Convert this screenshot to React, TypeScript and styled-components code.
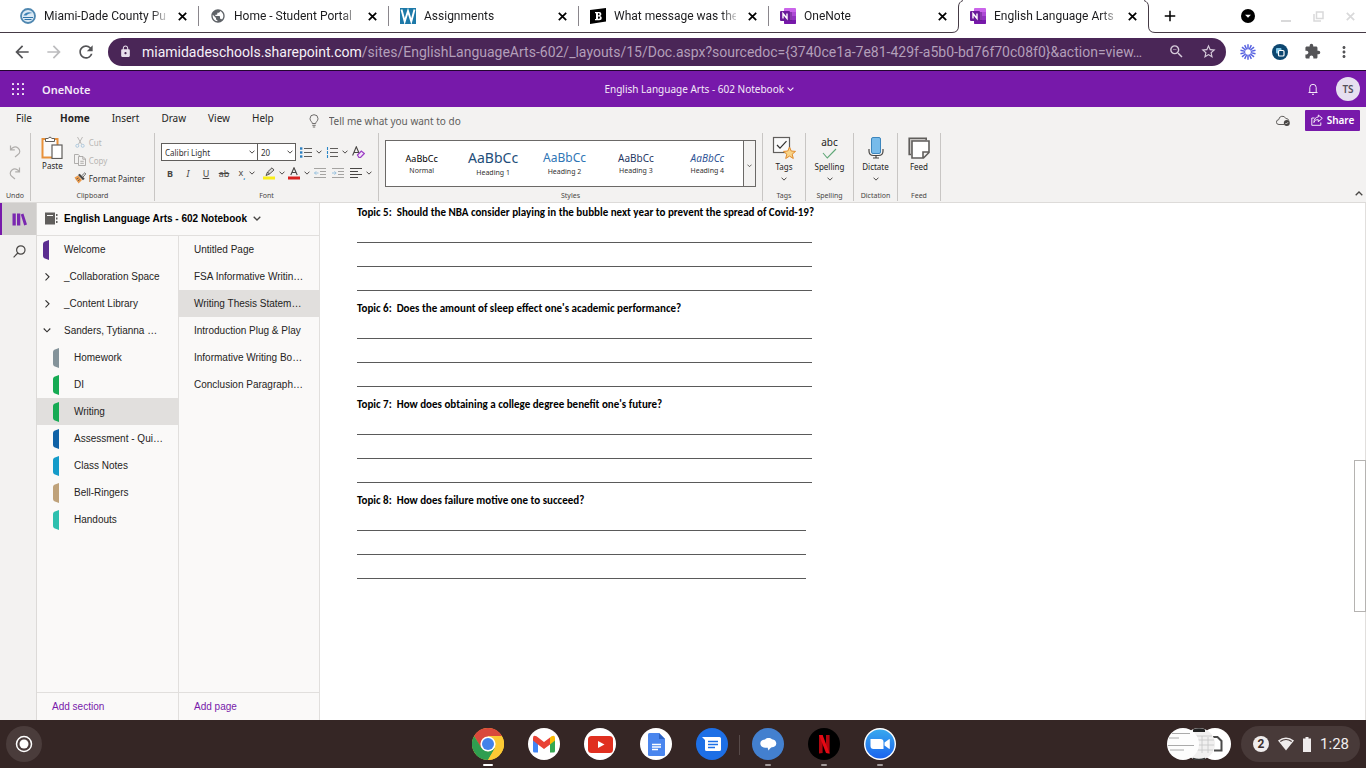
import React from 'react';
import styled, { createGlobalStyle, css } from 'styled-components';
import {
  MdArrowBack, MdArrowForward, MdRefresh, MdLock, MdZoomOut, MdStarBorder,
  MdExtension, MdMoreVert, MdPublic, MdAdd, MdArrowDropDown,
} from 'react-icons/md';

const ui = '"Noto Sans", "Open Sans", sans-serif';
const chromeFont = 'Roboto, sans-serif';
const side = '"Liberation Sans", Arial, sans-serif';
const docFont = 'Carlito, Lato, sans-serif';

const purple = '#7719aa';
const ribbonBg = '#f3f2f1';
const rule = '#c8c6c4';

const GlobalStyle = createGlobalStyle`
  *, *::before, *::after { box-sizing: border-box; }
  body { margin: 0; background: #fff; font-family: ${ui}; color: #252423; }
  button { border: 0; padding: 0; background: none; color: inherit; font: inherit; }
  a { color: inherit; text-decoration: none; }
  svg { display: block; flex: none; }
`;

const Screen = styled.div`
  display: flex;
  flex-direction: column;
  height: 100vh;
  overflow: hidden;
`;

/* ---------- browser tabs ---------- */

const TabStrip = styled.div`
  display: flex;
  flex: none;
  height: 33px;
  padding-left: 8px;
  border-bottom: 1px solid #453a45;
  font-family: ${chromeFont};
  font-size: 12px;
  color: #1c1c1e;
`;

const Tab = styled.div<{ $active?: boolean; $divider?: boolean }>`
  position: relative;
  display: flex;
  align-items: center;
  gap: 8px;
  flex: 0 1 190px;
  min-width: 0;
  padding: 0 8px 0 12px;
  ${p => p.$active && css`margin-bottom: -1px; padding-bottom: 1px; background: #fff;`}
  ${p => p.$divider && css`
    &::after {
      content: '';
      position: absolute;
      right: -1px;
      top: 6px;
      height: 20px;
      border-right: 1px solid #8a868c;
    }
  `}
`;

const TabTitle = styled.span`
  flex: 1;
  min-width: 0;
  white-space: nowrap;
  mask-image: linear-gradient(to right, #000 88%, rgba(0, 0, 0, 0.2));
`;

const CloseTab = styled.button`
  display: grid;
  place-items: center;
  width: 16px;
  height: 16px;
  color: #000;
`;

const Edge = styled.svg<{ $right?: boolean }>`
  position: absolute;
  top: 0;
  ${p => (p.$right ? 'right: -7px; transform: scaleX(-1);' : 'left: -6px;')}
`;

const WindowControls = styled.div`
  display: flex;
  align-items: center;
  margin-left: auto;
  padding-right: 8px;
  gap: 16px;
  color: #d9d9da;
`;

const NewTab = styled.button`
  display: grid;
  place-items: center;
  width: 20px;
  margin-left: 12px;
  color: #000;
`;

const Round = styled.button`
  display: grid;
  place-items: center;
  width: 14px;
  height: 14px;
  margin: 0 7px 0 0;
  border-radius: 50%;
  background: #000;
  color: #fff;
`;

const WinButton = styled.button`
  display: grid;
  place-items: center;
  width: 16px;
  height: 16px;
`;

/* ---------- address bar ---------- */

const Toolbar = styled.div`
  display: flex;
  align-items: center;
  flex: none;
  height: 38px;
  padding: 0 6px;
  border-bottom: 1px solid #22062f;
  color: #5f6368;
`;

const ToolButton = styled.button<{ $faint?: boolean }>`
  display: grid;
  place-items: center;
  width: 32px;
  height: 28px;
  color: ${p => (p.$faint ? '#bcbcbe' : '#545457')};
`;

const Omnibox = styled.div`
  display: flex;
  align-items: center;
  flex: 1;
  min-width: 0;
  height: 28px;
  margin: 0 6px;
  padding: 0 2px 0 11px;
  border-radius: 14px;
  background: #4a2657;
  color: #e9e0ec;
  font-family: ${chromeFont};
  font-size: 14px;
`;

const Url = styled.a`
  flex: 1;
  min-width: 0;
  margin: 0 8px 0 10px;
  overflow: hidden;
  white-space: nowrap;
  text-overflow: ellipsis;
  color: #b39fba;
  b { font-weight: 400; color: #f6f1f8; }
`;

const OmniButton = styled.button`
  display: grid;
  place-items: center;
  width: 32px;
  color: #d7cbdb;
`;

/* ---------- OneNote header ---------- */

const AppHeader = styled.header`
  display: flex;
  align-items: center;
  justify-content: space-between;
  flex: none;
  height: 36px;
  padding: 0 6px 0 12px;
  background: ${purple};
  color: #f4eaf8;
  font-size: 10px;
`;

const HeaderSide = styled.div`
  display: flex;
  align-items: center;
  gap: 18px;
`;

const Brand = styled.span`
  font-size: 11px;
  font-weight: 600;
`;

const NotebookTitle = styled.button`
  display: flex;
  align-items: center;
  gap: 3px;
`;

const Avatar = styled.span`
  display: grid;
  place-items: center;
  width: 24px;
  height: 24px;
  border-radius: 50%;
  background: #e6dff0;
  color: #55505c;
  font-size: 10px;
  font-weight: 600;
`;

/* ---------- ribbon ---------- */

const RibbonTabs = styled.div`
  display: flex;
  align-items: center;
  flex: none;
  height: 26px;
  padding: 0 6px 0 16px;
  background: ${ribbonBg};
  font-size: 10px;
`;

const RibbonTab = styled.button<{ $active?: boolean }>`
  height: 22px;
  margin: 0 22px 4px 0;
  font-weight: ${p => (p.$active ? 700 : 400)};
  &:first-child { margin-right: 28px; }
`;

const TellMe = styled.label`
  display: flex;
  align-items: center;
  gap: 10px;
  flex: 1;
  margin: 2px 0 0 13px;
  color: #605e5c;
  input {
    width: 200px;
    padding: 0;
    border: 0;
    background: none;
    font: inherit;
    color: inherit;
  }
  input::placeholder { color: #605e5c; opacity: 1; }
`;

const ShareButton = styled.button`
  display: flex;
  align-items: center;
  justify-content: center;
  gap: 4px;
  width: 55px;
  height: 21px;
  margin-left: 15px;
  border-radius: 1px;
  background: ${purple};
  color: #fff;
  font-weight: 600;
`;

const Ribbon = styled.div`
  display: flex;
  flex: none;
  height: 70px;
  padding-bottom: 1px;
  border-bottom: 1px solid #dddbd9;
  background: ${ribbonBg};
`;

const Group = styled.section<{ $w: number }>`
  display: flex;
  flex-direction: column;
  flex: none;
  width: ${p => p.$w}px;
  border-right: 1px solid ${rule};
  font-size: 8px;
`;

const GroupBody = styled.div`
  display: flex;
  flex: 1;
  min-height: 0;
`;

const GroupLabel = styled.div`
  height: 10px;
  line-height: 10px;
  text-align: center;
  font-size: 7px;
  color: #484644;
`;

const Stack = styled.div<{ $pad?: string; $gap?: number }>`
  display: flex;
  flex-direction: column;
  gap: ${p => p.$gap ?? 0}px;
  padding: ${p => p.$pad ?? '0'};
`;

const UndoButton = styled.button`
  display: grid;
  place-items: center;
  width: 30px;
  height: 22px;
  color: #b0aeac;
`;

const BigButton = styled.button`
  display: flex;
  flex-direction: column;
  align-items: center;
  justify-content: flex-start;
  flex: 1;
  padding-top: 3px;
  line-height: 12px;
  svg + span { margin-top: 1px; }
  span + svg { margin-top: 4px; }
`;

const AbcLabel = styled.em`
  height: 12px;
  font-style: normal;
  font-size: 10px;
`;

const RowButton = styled.button<{ $off?: boolean }>`
  display: flex;
  align-items: center;
  gap: 3px;
  height: 18px;
  color: ${p => (p.$off ? '#b8b6b4' : '#323130')};
`;

const FontRow = styled.div`
  display: flex;
  align-items: center;
  height: 18px;
`;

const SelectBox = styled.label<{ $w: number }>`
  position: relative;
  display: block;
  width: ${p => p.$w}px;
  margin-right: -1px;
  select {
    display: block;
    width: 100%;
    height: 18px;
    padding: 0 3px;
    appearance: none;
    border: 1px solid #605e5c;
    border-radius: 0;
    background: #fff;
    color: #323130;
    font-family: ${ui};
    font-size: 8px;
  }
  svg { position: absolute; right: 3px; top: 7px; }
`;

const IconButton = styled.button<{ $w: number; $off?: boolean }>`
  display: flex;
  align-items: center;
  justify-content: center;
  gap: 4px;
  width: ${p => p.$w}px;
  height: 18px;
  font-size: 9px;
  color: #484644;
  opacity: ${p => (p.$off ? 0.45 : 1)};
  sub { color: #2b88c8; font-weight: 700; }
`;

const Gallery = styled.div`
  display: flex;
  flex: 1;
  height: 47px;
  margin: 7px 6px 0;
  border: 1px solid #6b6967;
  background: #fff;
`;

const StyleCard = styled.button<{ $size: number; $color: string; $italic?: boolean }>`
  display: flex;
  flex-direction: column;
  align-items: center;
  justify-content: center;
  flex: 1;
  gap: 2px;
  padding-top: 1px;
  font-size: 7px;
  line-height: 10px;
  color: #323130;
  b {
    font-weight: 400;
    font-style: ${p => (p.$italic ? 'italic' : 'normal')};
    font-size: ${p => p.$size}px;
    line-height: ${p => p.$size + 2}px;
    color: ${p => p.$color};
  }
`;

const GalleryMore = styled.button`
  display: grid;
  place-items: center;
  width: 12px;
  border-left: 1px solid #6b6967;
  background: ${ribbonBg};
  padding-top: 4px;
`;

const Collapse = styled.button`
  align-self: flex-end;
  margin: 0 3px 5px auto;
`;

/* ---------- workspace ---------- */

const Workspace = styled.div`
  display: flex;
  flex: 1;
  min-height: 0;
`;

const Rail = styled.nav`
  flex: none;
  width: 37px;
  border-right: 1px solid #dcdad8;
  background: ${ribbonBg};
`;

const RailButton = styled.button<{ $active?: boolean }>`
  display: grid;
  place-items: center;
  width: 36px;
  height: 32px;
  border-left: 2px solid ${p => (p.$active ? purple : 'transparent')};
  background: ${p => (p.$active ? '#d0cecc' : 'transparent')};
`;

const NavPane = styled.aside`
  display: flex;
  flex-direction: column;
  flex: none;
  width: 283px;
  border-right: 1px solid #e1dfdd;
  background: #faf9f8;
  font-family: ${side};
  font-size: 10px;
`;

const NotebookHead = styled.button`
  display: flex;
  align-items: center;
  flex: none;
  height: 33px;
  padding: 0 0 2px 8px;
  gap: 6px;
  border-bottom: 1px solid #e1dfdd;
  font-weight: 700;
  color: #000;
`;

const NavColumns = styled.div`
  display: grid;
  grid-template-columns: 142px 1fr;
  flex: 1;
  min-height: 0;
`;

const NavColumn = styled.div`
  display: flex;
  flex-direction: column;
  min-width: 0;
  &:first-child { border-right: 1px solid #e1dfdd; }
`;

const NavItem = styled.button<{ $active?: boolean; $nested?: boolean; $page?: boolean }>`
  display: flex;
  align-items: center;
  width: 100%;
  height: 27px;
  padding-left: ${p => (p.$page ? 15 : p.$nested ? 16 : 6)}px;
  background: ${p => (p.$active ? '#e1dfdd' : 'transparent')};
  white-space: nowrap;
`;

const Marker = styled.span`
  display: block;
  flex: none;
  width: 21px;
`;

const AddLink = styled.button`
  height: 28px;
  margin-top: auto;
  padding-left: 15px;
  border-top: 1px solid #e1dfdd;
  text-align: left;
  color: ${purple};
`;

/* ---------- note page ---------- */

const Page = styled.main`
  position: relative;
  flex: 1;
  min-width: 0;
  padding-left: 37px;
  border-right: 1px solid #e1dfdd;
  background: #fff;
`;

const Topic = styled.section<{ $w: number }>`
  padding-bottom: 8px;
  font-family: ${docFont};
  h2 {
    margin: 0;
    font-size: 11px;
    line-height: 20px;
    font-weight: 700;
    color: #000;
    white-space: pre;
  }
  div {
    display: flex;
    flex-direction: column;
    gap: 23px;
    width: ${p => p.$w}px;
    padding-top: 19px;
  }
`;

const AnswerLine = styled.hr`
  width: 100%;
  height: 1px;
  margin: 0;
  border: 0;
  background: #5a5a5a;
`;

const ScrollThumb = styled.div`
  position: absolute;
  right: -1px;
  top: 257px;
  width: 12px;
  height: 152px;
  border: 1px solid #b5b3b1;
  background: #fff;
`;

/* ---------- shelf ---------- */

const Shelf = styled.footer`
  display: grid;
  grid-template-columns: 1fr auto 1fr;
  align-items: center;
  flex: none;
  height: 48px;
  padding: 0 6px;
  background: #352625;
  color: #f1eeee;
  font-family: ${chromeFont};
`;

const Launcher = styled.button`
  display: grid;
  place-items: center;
  width: 36px;
  height: 36px;
  border-radius: 50%;
  background: #4a3c3b;
`;

const Apps = styled.div`
  display: flex;
  height: 48px;
  padding-left: 2px;
`;

const AppButton = styled.button<{ $mark?: string; $divider?: boolean }>`
  position: relative;
  display: grid;
  place-items: center;
  width: 56px;
  &::after {
    content: '';
    position: absolute;
    left: ${p => (p.$mark === 'open' ? 25 : 23)}px;
    bottom: 2px;
    width: ${p => (p.$mark === 'open' ? 6 : 10)}px;
    height: 2px;
    border-radius: 1px;
    background: ${p => (p.$mark === 'open' ? '#a39b9a' : p.$mark ? '#fff' : 'transparent')};
  }
  ${p => p.$divider && css`
    &::before {
      content: '';
      position: absolute;
      left: -1px;
      top: 15px;
      height: 20px;
      border-left: 1px solid #574a49;
    }
  `}
`;

const Status = styled.div`
  display: flex;
  align-items: center;
  justify-content: flex-end;
  gap: 10px;
`;

const Tray = styled.button`
  display: flex;
  align-items: center;
  gap: 9px;
  height: 36px;
  padding: 0 11px 0 12px;
  border-radius: 18px;
  background: #483a39;
  font-size: 15px;
`;

const Count = styled.span`
  display: grid;
  place-items: center;
  width: 16px;
  height: 16px;
  border-radius: 50%;
  background: #efecec;
  color: #3b2e2d;
  font-size: 12px;
  font-weight: 700;
`;

/* ---------- drawings ---------- */

type ChevronProps = { w?: number; color?: string; up?: boolean };
const Chevron = ({ w = 6, color = '#484644', up }: ChevronProps) => (
  <svg width={w} height={w / 2 + 1} viewBox="0 0 8 5" fill="none" stroke={color} strokeWidth="1.3">
    <path d={up ? 'M.7 4.3 4 1l3.3 3.3' : 'M.7.7 4 4 7.3.7'} />
  </svg>
);

const Cross = () => (
  <svg width="9" height="9" viewBox="0 0 9 9" stroke="currentColor" strokeWidth="1.700">
    <path d="m.8.8 7.400 7.400M8.200.8.8 8.200" />
  </svg>
);

const OneNoteLogo = () => (
  <svg width="16" height="16" viewBox="0 0 16 16">
    <rect x="4" width="12" height="16" rx="1" fill="#ca64ea" />
    <path d="M12 4h4v4h-4z" fill="#ae4bd5" />
    <path d="M12 8h4v4h-4z" fill="#9332bf" />
    <path d="M4 12h12v3a1 1 0 0 1-1 1H5a1 1 0 0 1-1-1z" fill="#7719aa" />
    <path d="M4 4h8v9H4z" fill="#5d1a84" opacity=".6" />
    <rect y="3" width="10" height="10" rx="1" fill="#6a1b9a" />
    <path d="M3 10.5v-5l4 5v-5" fill="none" stroke="#fff" strokeWidth="1.4" />
  </svg>
);

const DistrictLogo = () => (
  <svg width="16" height="16" viewBox="0 0 16 16">
    <circle cx="8" cy="8" r="7" fill="#dceaf5" stroke="#4f87b0" strokeWidth="1.8" />
    <path d="M3 9.500h10M4.500 11.500h7" stroke="#2f74a8" strokeWidth="1.2" />
    <path d="M3.500 7.500c2-3 5-4 9-2.500-3 0-5 1-6 2.500z" fill="#3c82b5" />
  </svg>
);

const WLogo = () => (
  <svg width="16" height="16" viewBox="0 0 16 16">
    <rect width="16" height="16" fill="#1d79a8" />
    <path d="m1.500 1.500 3.200 12L8 3l3.300 10.500 3.200-12" fill="none" stroke="#fff" strokeWidth="1.900" />
  </svg>
);

const BLogo = () => (
  <svg width="16" height="16" viewBox="0 0 16 16">
    <path d="M0 2 16 0v13.500L0 16z" fill="#000" />
    <path d="M5 4h4.200q2.200 0 2.200 2 0 1.400-1.300 1.900 1.700.4 1.700 2 0 2.300-2.600 2.300H5v-1.300h1V5.200H5zm3 1.300v2h.8q.8 0 .8-1t-.8-1zm0 3.200v2.300h1q.9 0 .9-1.200T9 8.500z" fill="#fff" fillRule="evenodd" />
  </svg>
);

const Burst = () => (
  <svg width="16" height="16" viewBox="0 0 16 16" stroke="#5661e0" strokeWidth="1.500">
    {Array.from({ length: 14 }, (_, i) => (
      <path key={i} d="M8 .3v4.900" transform={`rotate(${(i * 360) / 14} 8 8)`} />
    ))}
  </svg>
);

const CopyBadge = () => (
  <svg width="16" height="16" viewBox="0 0 16 16">
    <circle cx="8" cy="8" r="8" fill="#0d4770" />
    <rect x="4" y="4" width="5.500" height="5.500" rx="1" fill="#7fc6e8" />
    <rect x="6.500" y="6.500" width="5.500" height="5.500" rx="1" fill="#0d4770" stroke="#fff" strokeWidth="1.200" />
  </svg>
);

const Waffle = () => (
  <svg width="12" height="12" viewBox="0 0 12 12" fill="#f4eaf8">
    {[0, 5, 10].map(y => [0, 5, 10].map(x => <rect key={`${x}-${y}`} x={x} y={y} width="2" height="2" rx=".6" />))}
  </svg>
);

const Bell = () => (
  <svg width="10" height="12" viewBox="0 0 10 12" fill="none" stroke="#f4eaf8">
    <path d="M.5 9.500h9M1.800 9.500V4.500a3.200 3.200 0 0 1 6.400 0v5M4 11.300h2" />
  </svg>
);

const Bulb = () => (
  <svg width="10" height="14" viewBox="0 0 10 14" fill="none" stroke="#605e5c" strokeWidth=".9">
    <path d="M3.300 9.500C3.300 7.800 1 7 1 4.700a4 4 0 0 1 8 0C9 7 6.700 7.800 6.700 9.500zM3.300 11.300h3.400M3.800 13h2.400" />
  </svg>
);

const CloudSaved = () => (
  <svg width="14" height="11" viewBox="0 0 14 11">
    <path d="M8 9.500H3a2.400 2.400 0 0 1-.3-4.800A3.700 3.700 0 0 1 9.800 3.500 2.800 2.800 0 0 1 12.800 5.500" fill="none" stroke="#605e5c" />
    <circle cx="10.800" cy="8" r="3" fill="#484644" />
    <path d="m9.400 8 1 1 1.700-1.800" fill="none" stroke="#fff" strokeWidth=".7" />
  </svg>
);

const ShareIcon = () => (
  <svg width="12" height="12" viewBox="0 0 12 12" fill="none" stroke="#fff" strokeWidth=".9">
    <path d="M3.500 4H.8v7.300h9V8.500M7.300 1l4 3.300-4 3.400V5.700C5 5.500 3.700 6.500 2.900 8.500 3 5.300 4.600 3.100 7.300 3z" />
  </svg>
);

const UndoIcon = ({ redo }: { redo?: boolean }) => (
  <svg width="12" height="13" viewBox="0 0 12 13" fill="none" stroke="currentColor" strokeWidth="1.200">
    {redo
      ? <path d="M10.500.500v4.300H6.200M10.300 4.600C8.500 2 5.500 1 3 3c-2.500 2-2.200 5 0 6.500l3 2.500" />
      : <path d="M1.500.500v4.300h4.300M1.700 4.600C3.500 2 6.500 1 9 3c2.500 2 2.200 5 0 6.500L6 12" />}
  </svg>
);

const PasteIcon = () => (
  <svg width="22" height="23" viewBox="0 0 22 23" fill="none">
    <rect x="1.500" y="3" width="15" height="18.500" fill="#fafafa" stroke="#e8913a" strokeWidth="2" />
    <path d="M4.500 5.500v-3h2.700a1.900 1.900 0 0 1 3.600 0h2.700v3z" fill="#fff" stroke="#605e5c" />
    <rect x="11" y="9" width="10" height="13.500" fill="#fff" stroke="#605e5c" strokeWidth="1.200" />
  </svg>
);

const CutIcon = () => (
  <svg width="12" height="12" viewBox="0 0 12 12" fill="none" stroke="#b4b2b0" strokeWidth=".9">
    <path d="m3.500 1 4.200 7.500M8.500 1 4.300 8.500" />
    <circle cx="3.300" cy="9.800" r="1.500" stroke="#a9c6dc" /><circle cx="8.700" cy="9.800" r="1.500" stroke="#a9c6dc" />
  </svg>
);

const CopyIcon = () => (
  <svg width="12" height="12" viewBox="0 0 12 12" fill="none" stroke="#a8a6a4" strokeWidth=".9">
    <path d="M4.500 9.500h-4v-9h3.700L6 2.300" /><path d="M4.500 2.500H9l2.500 2.500v6.500h-7zM8.800 2.700v2.500h2.500M6.300 7.300h3.500M6.300 9.300h3.500" />
  </svg>
);

const PainterIcon = () => (
  <svg width="12" height="12" viewBox="0 0 12 12">
    <path d="M.5 5.500 4 3.500l4 4.500-3.500 3.500C4 9.500 2 8.500.5 5.500z" fill="#ea9a4c" />
    <path d="m4 3 1.700-1.200 5 5L9 8.300z" fill="#484644" />
    <path d="M7.500 4 10.800.800l1 1-3 3.500z" fill="#fff" stroke="#484644" strokeWidth=".8" />
    <path d="m2.500 7 2-1M3.800 9l2-1.500" stroke="#484644" strokeWidth=".7" />
  </svg>
);

const ListIcon = ({ numbered }: { numbered?: boolean }) => (
  <svg width="12" height="11" viewBox="0 0 12 11">
    {[1.5, 5.5, 9.5].map(y => (
      <g key={y}>
        <path d={`M4 ${y}h8`} stroke="#605e5c" />
        {numbered
          ? <path d={`M1.500 ${y - 1.5}v3`} stroke="#2b88c8" strokeWidth="1.100" />
          : <rect x="0" y={y - 1.2} width="2.400" height="2.400" fill="#2b7fc0" />}
      </g>
    ))}
  </svg>
);

const ClearFormat = () => (
  <svg width="13" height="12" viewBox="0 0 13 12" fill="none">
    <path d="M.6 9.500 4.300.800 7 7M1.900 6.500h4.500" stroke="#484644" strokeWidth="1.100" />
    <path d="m5.500 9 3.800-4L12.300 7.500l-3.800 4H7z" stroke="#9b3fc4" strokeWidth="1.200" fill="#f3e3f8" />
  </svg>
);

const Highlighter = () => (
  <svg width="12" height="13" viewBox="0 0 12 13">
    <path d="M0 9.500h12v3H0z" fill="#f9ee1a" />
    <path d="M3 8.500 4.500 5 9 .800 11 3 6.500 7z" fill="#d9d7d5" stroke="#484644" strokeWidth=".9" />
    <path d="m4.500 5 2 2" stroke="#484644" />
  </svg>
);

const FontColor = () => (
  <svg width="12" height="13" viewBox="0 0 12 13">
    <path d="M0 9.500h12v3H0z" fill="#d8221f" />
    <path d="M2.800 8 6 .800 9.200 8M3.900 5.500h4.200" fill="none" stroke="#484644" strokeWidth="1.100" />
  </svg>
);

const LinesIcon = ({ indent }: { indent?: 'in' | 'out' }) => (
  <svg width="12" height="10" viewBox="0 0 12 10" fill="none" stroke="#484644">
    {indent
      ? <>
          <path d="M0 .500h12M6 3.500h6M6 6.500h6M0 9.500h12" />
          <path d={indent === 'in' ? 'M0 5h4M2.500 3.300 4.200 5 2.500 6.700' : 'M.5 5h4M2.200 3.300.5 5l1.700 1.700'} stroke="#2b88c8" />
        </>
      : <path d="M0 .500h12M0 3.500h8M0 6.500h12M0 9.500h8" />}
  </svg>
);

const TagsIcon = () => (
  <svg width="24" height="24" viewBox="0 0 24 24" fill="none">
    <rect x="1.500" y="1.500" width="16" height="15" fill="#fafafa" stroke="#605e5c" strokeWidth="1.200" />
    <path d="m5 9 3 3.200 6.500-7" stroke="#323130" strokeWidth="1.200" />
    <path d="m17.500 11 1.700 4 4.300.400-3.300 2.800 1.100 4.300-3.800-2.400-3.800 2.400 1.100-4.300-3.300-2.800 4.300-.400z" fill="#f8d387" stroke="#e08a2c" />
  </svg>
);

const SpellIcon = () => (
  <svg width="22" height="12" viewBox="0 0 22 12" fill="none" stroke="#5fa777" strokeWidth="1.100"><path d="m4 5 4.300 5L17 1" /></svg>
);

const MicIcon = () => (
  <svg width="16" height="24" viewBox="0 0 16 24" fill="none">
    <path d="M1 13v2c0 3 2 4.500 4.500 4.500h5C13 19.500 15 18 15 15v-2M8 19.500V22M5 22h6" stroke="#484644" strokeWidth="1.200" />
    <rect x="3.500" y="1.500" width="9" height="16" rx="1.500" fill="#77bbea" stroke="#3d86bd" />
  </svg>
);

const FeedIcon = () => (
  <svg width="24" height="24" viewBox="0 0 24 24" fill="none" stroke="#605e5c" strokeWidth="1.600">
    <path d="M4 18.500H2.200V2.200h17v2" fill="#c8c6c4" />
    <path d="M5 5h17v11.500L16.500 22H5zM22 16h-6v6" fill="#fff" />
  </svg>
);

const LibraryIcon = () => (
  <svg width="15" height="13" viewBox="0 0 15 13" fill="#7a27b0">
    <path d="M.5.500h3.300v12H.5zM5 .500h3.300v12H5zM8.800 1.400l2.600-1 3.600 11-2.800 1.100z" />
  </svg>
);

const SearchIcon = () => (
  <svg width="13" height="13" viewBox="0 0 13 13" fill="none" stroke="#484644" strokeWidth="1.200">
    <circle cx="7.800" cy="5" r="4.200" /><path d="M4.800 8 .6 12.300" />
  </svg>
);

const NotebookIcon = () => (
  <svg width="13" height="13" viewBox="0 0 13 13" fill="#605e5c">
    <path d="M0 .500h10v12H0zM11 2h1.500v2H11zM11 5.500h1.500v2H11zM11 9h1.500v2H11z" />
    <path d="M2 3.500h6" stroke="#faf9f8" />
  </svg>
);

const SectionTab = ({ color }: { color: string }) => (
  <svg width="6" height="20" viewBox="0 0 6 20"><path d="M6 0v20L1.300 18.200Q0 17.500 0 16V4q0-1.500 1.300-2.200z" fill={color} /></svg>
);

const Caret = ({ open }: { open?: boolean }) => (
  <svg width="8" height="8" viewBox="0 0 8 8" fill="none" stroke="#323130" strokeWidth="1.100">
    <path d={open ? 'M.7 1.500 4 4.800 7.300 1.500' : 'M2.500.300 6 3.800 2.500 7.300'} />
  </svg>
);

const Disc = ({ fill, children }: { fill: string; children?: React.ReactNode }) => (
  <svg width="32" height="32" viewBox="0 0 32 32"><circle cx="16" cy="16" r="16" fill={fill} />{children}</svg>
);

const ChromeLogo = () => (
  <Disc fill="#fbc934">
    <path d="M2.140 8A16 16 0 0 1 29.860 8L16 8.500 9 20z" fill="#d9493c" />
    <path d="M2.140 8A16 16 0 0 0 16 32l7-12-7 3.500-6.500-3.500z" fill="#2f9e50" />
    <path d="M29.860 8H16v8l7 4-7 12a16 16 0 0 0 13.860-24z" fill="#fbc934" />
    <circle cx="16" cy="16" r="7.600" fill="#fff" /><circle cx="16" cy="16" r="6" fill="#4382ea" />
  </Disc>
);

const GmailLogo = () => (
  <Disc fill="#fff">
    <path d="M5 10v13q0 1.500 1.500 1.500H10V13z" fill="#4285f4" />
    <path d="M27 10v13q0 1.500-1.500 1.500H22V13z" fill="#34a853" />
    <path d="M22 9.500 23.500 8.200Q27 6.500 27 10v2.500L22 16.500z" fill="#fbbc04" />
    <path d="M5 12.500V10q0-3.500 3.500-1.800L16 14l6-4.500v7L16 21l-6-4.500z" fill="#e94235" />
  </Disc>
);

const YouTubeLogo = () => (
  <Disc fill="#fff"><rect x="4" y="8" width="25" height="17" rx="3.500" fill="#e02f1f" /><path d="m14 13 6.500 3.500L14 20z" fill="#fff" /></Disc>
);

const DocsLogo = () => (
  <Disc fill="#fff">
    <path d="M8 6.500Q8 5 9.500 5H19l6 6v15.500q0 1.500-1.500 1.500h-14Q8 28 8 26.500z" fill="#4a86ee" />
    <path d="M19 5v6h6z" fill="#2c63c4" />
    <path d="M12 16.500h9M12 19h9M12 21.500h6" stroke="#fff" strokeWidth="1.300" />
  </Disc>
);

const MessagesLogo = () => (
  <Disc fill="#1d6fe6">
    <path d="M6 9h17.500Q25 9 25 10.500v11q0 1.500-1.500 1.500h-13Q9 23 9 21.500V12z" fill="#fff" />
    <path d="M12 13.500h10M12 16.500h10M12 19.500h7" stroke="#1d6fe6" strokeWidth="1.300" />
  </Disc>
);

const ChatLogo = () => (
  <Disc fill="#4380cf">
    <path d="M8.300 15.500c0-3 3-4 4.700-4 2-2 5.500-1.700 7-.2 2.500.2 4.300 2 4.300 4.200 0 2.500-2.300 3.700-4.300 3.700-1 .3-2.300 1-3.200 3.300-.8-1-1-2-1-2.800-3.500.5-7.500-.7-7.500-4.200z" fill="#fff" />
  </Disc>
);

const NetflixLogo = () => (
  <Disc fill="#000">
    <path d="M11 7h3.600v18l-3.600.500zM18 7h3.600v18.500L18 25z" fill="#b1060f" />
    <path d="M11 7h3.600l7 18.500L18 25z" fill="#e50914" />
  </Disc>
);

const ZoomLogo = () => (
  <Disc fill="#fff">
    <defs><linearGradient id="zoomBlue" x2="0" y2="1"><stop stopColor="#38a9ee" /><stop offset="1" stopColor="#1a63ee" /></linearGradient></defs>
    <circle cx="16" cy="16" r="14.600" fill="url(#zoomBlue)" />
    <path d="M6.500 11h10q3 0 3 3v7h-10q-3 0-3-3zM20.500 14.500l4.500-3.300q.8-.4.8.5v8.600q0 .9-.8.5l-4.500-3.300z" fill="#fff" />
  </Disc>
);

const Previews = () => (
  <svg width="64" height="32" viewBox="0 0 64 32">
    <circle cx="48" cy="16" r="16" fill="#fff" />
    <path d="M46 9h4.500l4 4v9.500H47" fill="none" stroke="#4b4b4b" strokeWidth="2" />
    <circle cx="32" cy="16" r="16" fill="#f1f0f0" />
    <path d="M26 1.500Q32-1 38 1.500V4H26z" fill="#222" />
    <path d="M26 30.500q6 2 12 0" stroke="#333" strokeWidth="1.500" fill="none" />
    <path d="M28 8h17M30 12h17M31 17h16M29 22h17M35 8v17M41 9v16" stroke="#c4c4c4" strokeWidth=".8" />
    <circle cx="16" cy="16" r="16" fill="#fdfdfd" />
    <path d="M5 5.500h18M2 10h10M1 17.500h26M3 22h14" stroke="#aaa" />
  </svg>
);

const Wifi = () => (
  <svg width="16" height="14" viewBox="0 0 16 14"><path d="M8 13.500 0 3.500Q8-2.500 16 3.500z" fill="#efecec" /><path d="M2.300 4.500Q8 .500 13.700 4.500" fill="none" stroke="#483a39" strokeWidth="1.200" /></svg>
);

const Battery = () => (
  <svg width="8" height="15" viewBox="0 0 8 15" fill="#efecec"><path d="M2.500 0h3v1.500H8V15H0V1.500h2.500z" /></svg>
);

/* ---------- data ---------- */

const tabs: { title: string; icon: React.ReactNode; divider?: boolean; active?: boolean }[] = [
  { title: 'Miami-Dade County Pu', icon: <DistrictLogo />, divider: true },
  { title: 'Home - Student Portal', icon: <MdPublic size={16} color="#5f6368" />, divider: true },
  { title: 'Assignments', icon: <WLogo />, divider: true },
  { title: 'What message was the', icon: <BLogo />, divider: true },
  { title: 'OneNote', icon: <OneNoteLogo /> },
  { title: 'English Language Arts', icon: <OneNoteLogo />, active: true },
];

const styleCards = [
  { name: 'Normal', size: 9, color: '#000' },
  { name: 'Heading 1', size: 14, color: '#1e4e79' },
  { name: 'Heading 2', size: 12, color: '#2e75b5' },
  { name: 'Heading 3', size: 10, color: '#1f3763' },
  { name: 'Heading 4', size: 10, color: '#2f5496', italic: true },
];

const sections: { name: string; color?: string; open?: boolean; nested?: boolean; active?: boolean }[] = [
  { name: 'Welcome', color: '#5b2d90' },
  { name: '_Collaboration Space' },
  { name: '_Content Library' },
  { name: 'Sanders, Tytianna …', open: true },
  { name: 'Homework', color: '#84939a', nested: true },
  { name: 'DI', color: '#16ab54', nested: true },
  { name: 'Writing', color: '#16ab54', nested: true, active: true },
  { name: 'Assessment - Qui…', color: '#0f62a6', nested: true },
  { name: 'Class Notes', color: '#149bc9', nested: true },
  { name: 'Bell-Ringers', color: '#bfa27a', nested: true },
  { name: 'Handouts', color: '#2dbfae', nested: true },
];

const pages = [
  'Untitled Page', 'FSA Informative Writin…', 'Writing Thesis Statem…',
  'Introduction Plug & Play', 'Informative Writing Bo…', 'Conclusion Paragraph…',
];

const topics = [
  { text: 'Topic 5:  Should the NBA consider playing in the bubble next year to prevent the spread of Covid-19?', w: 455 },
  { text: "Topic 6:  Does the amount of sleep effect one's academic performance?", w: 455 },
  { text: "Topic 7:  How does obtaining a college degree benefit one's future?", w: 455 },
  { text: 'Topic 8:  How does failure motive one to succeed?', w: 449 },
];

const apps = [
  { name: 'Chrome', icon: <ChromeLogo />, mark: 'active' },
  { name: 'Gmail', icon: <GmailLogo /> },
  { name: 'YouTube', icon: <YouTubeLogo /> },
  { name: 'Docs', icon: <DocsLogo /> },
  { name: 'Messages', icon: <MessagesLogo /> },
  { name: 'Chat', icon: <ChatLogo />, mark: 'open', divider: true },
  { name: 'Netflix', icon: <NetflixLogo />, mark: 'open' },
  { name: 'Zoom', icon: <ZoomLogo />, mark: 'open' },
];

/* ---------- page ---------- */

const TabEdge = ({ right }: { right?: boolean }) => (
  <Edge $right={right} width="13" height="33" viewBox="0 0 13 33">
    <path d="M0 0h13v33H0z" fill="#fff" />
    <path d="M0 32.500q6.500 0 6.500-6.500V7Q6.500 2 11 .500" fill="none" stroke="#453a45" />
  </Edge>
);

const BrowserTabs = () => (
  <TabStrip>
    {tabs.map(t => (
      <Tab key={t.title} $active={t.active} $divider={t.divider}>
        {t.active && <><TabEdge /><TabEdge right /></>}
        {t.icon}
        <TabTitle>{t.title}</TabTitle>
        <CloseTab aria-label="Close tab"><Cross /></CloseTab>
      </Tab>
    ))}
    <NewTab aria-label="New tab"><MdAdd size={18} /></NewTab>
    <WindowControls>
      <Round aria-label="Search tabs"><MdArrowDropDown size={14} /></Round>
      <WinButton aria-label="Minimize"><svg width="10" height="12" stroke="currentColor" strokeWidth="2"><path d="M0 11h10" /></svg></WinButton>
      <WinButton aria-label="Restore">
        <svg width="11" height="11" fill="none" stroke="currentColor" strokeWidth="1.500"><path d="M1 3v7h7M3.500 1h6.500v6.500H3.500z" /></svg>
      </WinButton>
      <WinButton aria-label="Close"><Cross /></WinButton>
    </WindowControls>
  </TabStrip>
);

const AddressBar = () => (
  <Toolbar>
    <ToolButton aria-label="Back"><MdArrowBack size={20} /></ToolButton>
    <ToolButton aria-label="Forward" $faint><MdArrowForward size={20} /></ToolButton>
    <ToolButton aria-label="Reload"><MdRefresh size={20} /></ToolButton>
    <Omnibox>
      <MdLock size={13} />
      <Url href="#">
        <b>miamidadeschools.sharepoint.com</b>/sites/EnglishLanguageArts-602/_layouts/15/Doc.aspx?sourcedoc={'{3740ce1a-7e81-429f-a5b0-bd76f70c08f0}'}&amp;action=view…
      </Url>
      <OmniButton aria-label="Zoom"><MdZoomOut size={17} /></OmniButton>
      <OmniButton aria-label="Bookmark"><MdStarBorder size={17} /></OmniButton>
    </Omnibox>
    <ToolButton aria-label="Burst extension"><Burst /></ToolButton>
    <ToolButton aria-label="Copy extension"><CopyBadge /></ToolButton>
    <ToolButton aria-label="Extensions"><MdExtension size={17} /></ToolButton>
    <ToolButton aria-label="Menu"><MdMoreVert size={18} /></ToolButton>
  </Toolbar>
);

const RibbonArea = () => (
  <>
    <RibbonTabs>
      {['File', 'Home', 'Insert', 'Draw', 'View', 'Help'].map(t => (
        <RibbonTab key={t} $active={t === 'Home'}>{t}</RibbonTab>
      ))}
      <TellMe><Bulb /><input aria-label="Tell me what you want to do" placeholder="Tell me what you want to do" /></TellMe>
      <CloudSaved />
      <ShareButton><ShareIcon />Share</ShareButton>
    </RibbonTabs>
    <Ribbon>
      <Group $w={31}>
        <GroupBody>
          <Stack $pad="7px 0 0">
            <UndoButton aria-label="Undo"><UndoIcon /></UndoButton>
            <UndoButton aria-label="Redo"><UndoIcon redo /></UndoButton>
          </Stack>
        </GroupBody>
        <GroupLabel>Undo</GroupLabel>
      </Group>
      <Group $w={124}>
        <GroupBody>
          <BigButton><PasteIcon /><span>Paste</span></BigButton>
          <Stack $pad="0 9px 0 0">
            <RowButton $off><CutIcon />Cut</RowButton>
            <RowButton $off><CopyIcon />Copy</RowButton>
            <RowButton><PainterIcon />Format Painter</RowButton>
          </Stack>
        </GroupBody>
        <GroupLabel>Clipboard</GroupLabel>
      </Group>
      <Group $w={224}>
        <GroupBody>
          <Stack $pad="10px 0 0 6px" $gap={3}>
            <FontRow>
              <SelectBox $w={97}><select aria-label="Font"><option>Calibri Light</option></select><Chevron /></SelectBox>
              <SelectBox $w={39}><select aria-label="Font size"><option>20</option></select><Chevron /></SelectBox>
              <IconButton $w={31} aria-label="Bullets"><ListIcon /><Chevron /></IconButton>
              <IconButton $w={21} aria-label="Numbering"><ListIcon numbered /><Chevron /></IconButton>
              <IconButton $w={23} aria-label="Clear formatting"><ClearFormat /></IconButton>
            </FontRow>
            <FontRow>
              <IconButton $w={18}><b>B</b></IconButton>
              <IconButton $w={18}><i>I</i></IconButton>
              <IconButton $w={18}><u>U</u></IconButton>
              <IconButton $w={18}><s>ab</s></IconButton>
              <IconButton $w={28}><span>x<sub>,</sub></span><Chevron /></IconButton>
              <IconButton $w={25} aria-label="Highlight"><Highlighter /><Chevron /></IconButton>
              <IconButton $w={26} aria-label="Font color"><FontColor /><Chevron /></IconButton>
              <IconButton $w={16} $off aria-label="Decrease indent"><LinesIcon indent="out" /></IconButton>
              <IconButton $w={19} $off aria-label="Increase indent"><LinesIcon indent="in" /></IconButton>
              <IconButton $w={27} aria-label="Align"><LinesIcon /><Chevron /></IconButton>
            </FontRow>
          </Stack>
        </GroupBody>
        <GroupLabel>Font</GroupLabel>
      </Group>
      <Group $w={384}>
        <GroupBody>
          <Gallery>
            {styleCards.map(s => (
              <StyleCard key={s.name} $size={s.size} $color={s.color} $italic={s.italic}><b>AaBbCc</b>{s.name}</StyleCard>
            ))}
            <GalleryMore aria-label="More styles"><Chevron w={5} /></GalleryMore>
          </Gallery>
        </GroupBody>
        <GroupLabel>Styles</GroupLabel>
      </Group>
      <Group $w={43}>
        <GroupBody><BigButton><TagsIcon /><span>Tags</span><Chevron /></BigButton></GroupBody>
        <GroupLabel>Tags</GroupLabel>
      </Group>
      <Group $w={48}>
        <GroupBody>
          <BigButton><AbcLabel>abc</AbcLabel><SpellIcon /><span>Spelling</span><Chevron /></BigButton>
        </GroupBody>
        <GroupLabel>Spelling</GroupLabel>
      </Group>
      <Group $w={44}>
        <GroupBody><BigButton><MicIcon /><span>Dictate</span><Chevron /></BigButton></GroupBody>
        <GroupLabel>Dictation</GroupLabel>
      </Group>
      <Group $w={43}>
        <GroupBody><BigButton><FeedIcon /><span>Feed</span></BigButton></GroupBody>
        <GroupLabel>Feed</GroupLabel>
      </Group>
      <Collapse aria-label="Collapse ribbon"><Chevron w={8} up /></Collapse>
    </Ribbon>
  </>
);

const Navigation = () => (
  <NavPane>
    <NotebookHead><NotebookIcon />English Language Arts - 602 Notebook<Chevron w={8} /></NotebookHead>
    <NavColumns>
      <NavColumn>
        {sections.map(s => (
          <NavItem key={s.name} $nested={s.nested} $active={s.active}>
            <Marker>{s.color ? <SectionTab color={s.color} /> : <Caret open={s.open} />}</Marker>
            {s.name}
          </NavItem>
        ))}
        <AddLink>Add section</AddLink>
      </NavColumn>
      <NavColumn>
        {pages.map(p => <NavItem key={p} $page $active={p.startsWith('Writing')}>{p}</NavItem>)}
        <AddLink>Add page</AddLink>
      </NavColumn>
    </NavColumns>
  </NavPane>
);

export default function App() {
  return (
    <Screen>
      <GlobalStyle />
      <BrowserTabs />
      <AddressBar />
      <AppHeader>
        <HeaderSide><Waffle /><Brand>OneNote</Brand></HeaderSide>
        <NotebookTitle>English Language Arts - 602 Notebook<Chevron w={7} color="#f4eaf8" /></NotebookTitle>
        <HeaderSide><Bell /><Avatar>TS</Avatar></HeaderSide>
      </AppHeader>
      <RibbonArea />
      <Workspace>
        <Rail>
          <RailButton $active aria-label="Notebooks"><LibraryIcon /></RailButton>
          <RailButton aria-label="Search"><SearchIcon /></RailButton>
        </Rail>
        <Navigation />
        <Page>
          {topics.map(t => (
            <Topic key={t.text} $w={t.w}>
              <h2>{t.text}</h2>
              <div><AnswerLine /><AnswerLine /><AnswerLine /></div>
            </Topic>
          ))}
          <ScrollThumb />
        </Page>
      </Workspace>
      <Shelf>
        <Launcher aria-label="Launcher">
          <svg width="18" height="18"><circle cx="9" cy="9" r="7.500" fill="none" stroke="#fff" strokeWidth="1.500" /><circle cx="9" cy="9" r="4.500" fill="#fff" /></svg>
        </Launcher>
        <Apps>
          {apps.map(a => <AppButton key={a.name} aria-label={a.name} $mark={a.mark} $divider={a.divider}>{a.icon}</AppButton>)}
        </Apps>
        <Status>
          <Previews />
          <Tray><Count>2</Count><Wifi /><Battery />1:28</Tray>
        </Status>
      </Shelf>
    </Screen>
  );
}
